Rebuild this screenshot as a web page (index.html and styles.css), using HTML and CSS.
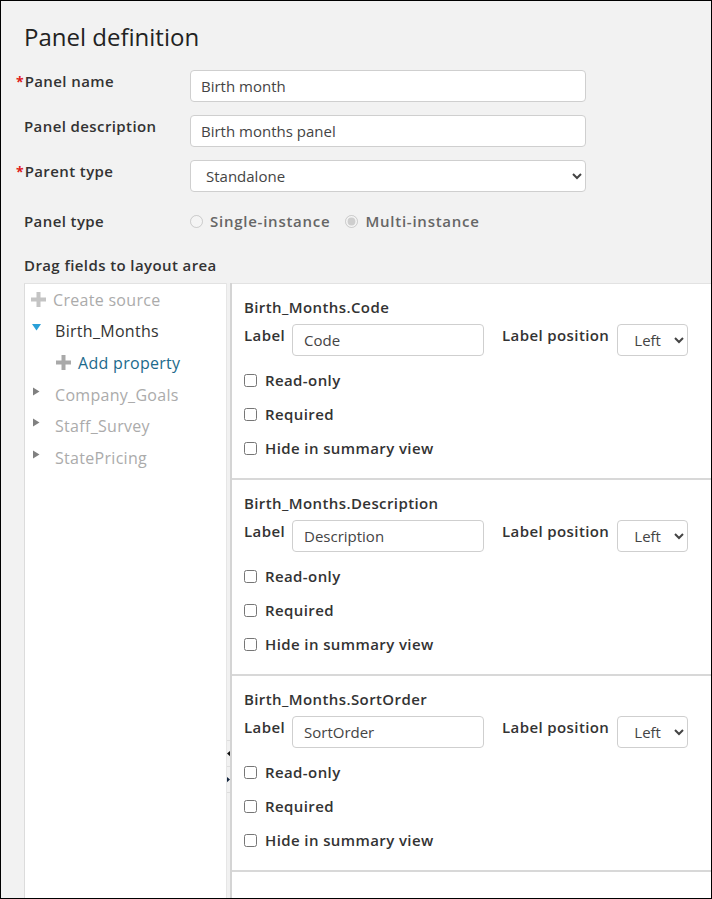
FILE: index.html
```html
<!DOCTYPE html>
<html lang="en">
<head>
<meta charset="utf-8">
<title>Panel definition</title>
<link rel="stylesheet" href="styles.css">
</head>
<body>
<div class="page">
  <h1 class="title">Panel definition</h1>

  <div class="form">
    <div class="flabel"><span class="req">*</span>Panel name</div>
    <input class="text-input" type="text" value="Birth month">

    <div class="flabel">Panel description</div>
    <input class="text-input" type="text" value="Birth months panel">

    <div class="flabel"><span class="req">*</span>Parent type</div>
    <select class="select-input">
      <option>Standalone</option>
    </select>

    <div class="flabel radio-label">Panel type</div>
    <div class="radios">
      <label class="radio"><input type="radio" name="ptype" disabled> Single-instance</label>
      <label class="radio"><input type="radio" name="ptype" checked disabled> Multi-instance</label>
    </div>
  </div>

  <div class="section-title">Drag fields to layout area</div>

  <div class="workspace">
    <div class="tree">
      <div class="tree-item muted">
        <svg class="plus" width="15" height="15" viewBox="0 0 15 15"><path d="M5.5 0h4v5.5H15v4H9.5V15h-4V9.5H0v-4h5.5z" fill="#c4c4c4"/></svg>
        <span class="create">Create source</span>
      </div>
      <div class="tree-item">
        <svg class="tri" width="9" height="7" viewBox="0 0 9 7"><path d="M0 0h9L4.5 6.5z" fill="#2aa0d8"/></svg>
        <span>Birth_Months</span>
      </div>
      <div class="tree-item child">
        <svg class="plus" width="15" height="15" viewBox="0 0 15 15"><path d="M5.5 0h4v5.5H15v4H9.5V15h-4V9.5H0v-4h5.5z" fill="#a9a9a9"/></svg>
        <span class="add">Add property</span>
      </div>
      <div class="tree-item muted">
        <svg class="tri" width="9" height="9" viewBox="0 0 9 9"><path d="M1 0.5L7.5 4.5 1 8.5z" fill="#808080"/></svg>
        <span>Company_Goals</span>
      </div>
      <div class="tree-item muted">
        <svg class="tri" width="9" height="9" viewBox="0 0 9 9"><path d="M1 0.5L7.5 4.5 1 8.5z" fill="#808080"/></svg>
        <span>Staff_Survey</span>
      </div>
      <div class="tree-item muted">
        <svg class="tri" width="9" height="9" viewBox="0 0 9 9"><path d="M1 0.5L7.5 4.5 1 8.5z" fill="#808080"/></svg>
        <span>StatePricing</span>
      </div>
    </div>

    <div class="splitter">
      <div class="split-btns">
        <div class="split-btn"><svg width="4" height="7" viewBox="0 0 4 7"><path d="M4 0v7L0 3.5z" fill="#111"/></svg></div>
        <div class="split-btn"><svg width="4" height="7" viewBox="0 0 4 7"><path d="M0 0v7l4-3.5z" fill="#14263f"/></svg></div>
      </div>
    </div>

    <div class="layout">
      <div class="card">
        <div class="card-title">Birth_Months.Code</div>
        <div class="card-row">
          <div class="clabel">Label</div>
          <input class="card-input" type="text" value="Code">
          <div class="clabel pos">Label position</div>
          <select class="card-select"><option>Left</option></select>
        </div>
        <div class="checks">
          <label class="check"><input type="checkbox"> Read-only</label>
          <label class="check"><input type="checkbox"> Required</label>
          <label class="check"><input type="checkbox"> Hide in summary view</label>
        </div>
      </div>
      <div class="card">
        <div class="card-title">Birth_Months.Description</div>
        <div class="card-row">
          <div class="clabel">Label</div>
          <input class="card-input" type="text" value="Description">
          <div class="clabel pos">Label position</div>
          <select class="card-select"><option>Left</option></select>
        </div>
        <div class="checks">
          <label class="check"><input type="checkbox"> Read-only</label>
          <label class="check"><input type="checkbox"> Required</label>
          <label class="check"><input type="checkbox"> Hide in summary view</label>
        </div>
      </div>
      <div class="card">
        <div class="card-title">Birth_Months.SortOrder</div>
        <div class="card-row">
          <div class="clabel">Label</div>
          <input class="card-input" type="text" value="SortOrder">
          <div class="clabel pos">Label position</div>
          <select class="card-select"><option>Left</option></select>
        </div>
        <div class="checks">
          <label class="check"><input type="checkbox"> Read-only</label>
          <label class="check"><input type="checkbox"> Required</label>
          <label class="check"><input type="checkbox"> Hide in summary view</label>
        </div>
      </div>
      <div class="card empty"></div>
    </div>
  </div>
</div>
</body>
</html>
```

FILE: styles.css
```css
* { box-sizing: border-box; }

html, body {
  margin: 0;
  padding: 0;
}

body {
  font-family: "Open Sans", "Noto Sans", sans-serif;
  color: #333;
}

.page {
  width: 712px;
  height: 899px;
  border: 1px solid #000;
  background: #f2f2f2;
  padding: 21px 0 0 23px;
  overflow: hidden;
  display: flex;
  flex-direction: column;
}

.title {
  margin: 0 0 18px 0;
  font-size: 24px;
  line-height: 30px;
  font-weight: 500;
  color: #222;
}

.form {
  display: grid;
  grid-template-columns: 166px 396px;
  row-gap: 13px;
  align-items: start;
}

.flabel {
  font-size: 15px;
  font-weight: 600;
  letter-spacing: 0.4px;
  line-height: 20px;
  color: #333;
  padding-top: 1px;
  white-space: nowrap;
}

.req {
  color: #e0201b;
  margin-left: -8px;
  margin-right: 1px;
  font-weight: 700;
  font-size: 14px;
  letter-spacing: 0;
}

.text-input,
.select-input {
  height: 32px;
  width: 396px;
  border: 1px solid #cfcfcf;
  border-radius: 4px;
  background: #fff;
  font-family: inherit;
  font-size: 15px;
  color: #444;
  padding: 0 10px;
  margin: 0;
}

.select-input {
  padding: 0 6px 0 11px;
}

.radio-label {
  margin-top: 6px;
  padding-top: 0;
}

.radios {
  margin-top: 6px;
  display: flex;
  align-items: center;
  gap: 15px;
  height: 20px;
}

.radio {
  display: flex;
  align-items: center;
  gap: 7px;
  font-size: 15px;
  font-weight: 600;
  letter-spacing: 0.75px;
  color: #666;
}

.radio input {
  margin: 0;
  width: 13px;
  height: 13px;
}

.section-title {
  margin-top: 24px;
  font-size: 15px;
  font-weight: 600;
  letter-spacing: 0.4px;
  line-height: 20px;
  color: #333;
}

.workspace {
  margin-top: 8px;
  flex: 1;
  display: flex;
  min-height: 0;
}

.tree {
  width: 202px;
  flex: none;
  background: #fff;
  border-left: 1px solid #dcdcdc;
  border-top: 1px solid #e2e2e2;
  padding: 0 0 0 6px;
}

.tree-item {
  height: 31.6px;
  display: flex;
  align-items: center;
  font-size: 16px;
  letter-spacing: 0.3px;
  color: #333;
  white-space: nowrap;
}

.tree-item.muted { color: #ababab; }

.tree-item .plus { margin-right: 8px; flex: none; }
.tree-item .tri { margin-left: 1px; margin-right: 14px; margin-top: -7px; flex: none; }
.tree-item.child { padding-left: 25px; }
.tree-item .add { color: #1c6a8c; margin-left: -1px; }
.tree-item .create { color: #ababab; margin-left: -1px; }

.splitter {
  width: 6px;
  flex: none;
  background: #f1f1f1;
  border-left: 1px solid #e6e6e6;
  border-right: 2px solid #d4d4d4;
  padding-top: 457px;
}

.split-btns {
  border-top: 1px solid #dedede;
}

.split-btn {
  height: 26px;
  border-bottom: 1px solid #dedede;
  display: flex;
  align-items: center;
  justify-content: flex-start;
}

.layout {
  width: 520px;
  flex: none;
  background: #fff;
  border-top: 1px solid #e2e2e2;
  overflow: hidden;
}

.card {
  padding: 13px 12px 20px 12px;
  border-bottom: 2px solid #d8d8d8;
}

.card.empty {
  height: 60px;
  border-bottom: none;
}

.card-title {
  font-size: 15px;
  font-weight: 600;
  letter-spacing: 0.4px;
  line-height: 20px;
  color: #333;
  margin-bottom: 7px;
}

.card-row {
  display: flex;
  align-items: flex-start;
}

.clabel {
  font-size: 15px;
  font-weight: 600;
  letter-spacing: 0.4px;
  line-height: 20px;
  padding-top: 1px;
  color: #333;
  width: 48px;
  flex: none;
  white-space: nowrap;
}

.clabel.pos {
  width: auto;
  margin-left: 18px;
  margin-right: 8px;
}

.card-input {
  width: 192px;
  height: 32px;
  border: 1px solid #cfcfcf;
  border-radius: 4px;
  background: #fff;
  font-family: inherit;
  font-size: 15px;
  color: #444;
  padding: 0 11px;
  margin: 0;
}

.card-select {
  width: 71px;
  height: 32px;
  border: 1px solid #cfcfcf;
  border-radius: 4px;
  background: #fff;
  font-family: inherit;
  font-size: 15px;
  color: #444;
  padding: 0 4px 0 12px;
  margin: 0;
}

.checks {
  margin-top: 14px;
  display: flex;
  flex-direction: column;
  gap: 14px;
}

.check {
  display: flex;
  align-items: center;
  gap: 8px;
  height: 20px;
  font-size: 15px;
  font-weight: 600;
  letter-spacing: 0.4px;
  color: #333;
}

.check input {
  margin: 0;
  width: 13px;
  height: 13px;
}
```
